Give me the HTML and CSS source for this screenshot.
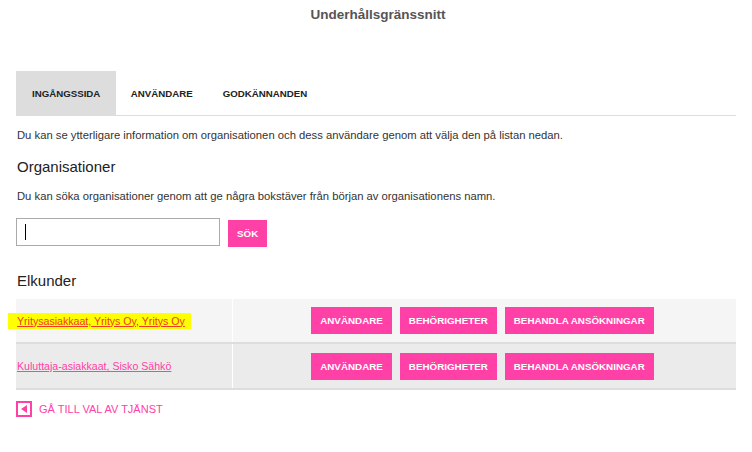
FILE: index.html
```html
<!DOCTYPE html>
<html lang="sv">
<head>
<meta charset="utf-8">
<title>Underhållsgränssnitt</title>
<link rel="stylesheet" href="styles.css">
</head>
<body>
<div class="page">
  <h1 class="title">Underhållsgränssnitt</h1>
  <nav class="tabs">
    <a class="tab active">INGÅNGSSIDA</a>
    <a class="tab">ANVÄNDARE</a>
    <a class="tab">GODKÄNNANDEN</a>
  </nav>
  <p class="text intro">Du kan se ytterligare information om organisationen och dess användare genom att välja den på listan nedan.</p>
  <h2 class="heading">Organisationer</h2>
  <p class="text">Du kan söka organisationer genom att ge några bokstäver från början av organisationens namn.</p>
  <div class="search">
    <div class="input"><span class="caret"></span></div>
    <button class="btn">SÖK</button>
  </div>
  <h2 class="heading elk">Elkunder</h2>
  <div class="table">
    <div class="row r1">
      <div class="cell name"><a class="link hl">Yritysasiakkaat, Yritys Oy, Yritys Oy </a></div>
      <div class="cell actions">
        <button class="btn">ANVÄNDARE</button>
        <button class="btn">BEHÖRIGHETER</button>
        <button class="btn">BEHANDLA ANSÖKNINGAR</button>
      </div>
    </div>
    <div class="row r2">
      <div class="cell name"><a class="link">Kuluttaja-asiakkaat, Sisko Sähkö </a></div>
      <div class="cell actions">
        <button class="btn">ANVÄNDARE</button>
        <button class="btn">BEHÖRIGHETER</button>
        <button class="btn">BEHANDLA ANSÖKNINGAR</button>
      </div>
    </div>
  </div>
  <a class="back">
    <span class="back-icon"><svg width="6" height="8" viewBox="0 0 6 8"><polygon points="6,0 6,8 0,4" fill="#ff40a6"/></svg></span>
    <span>GÅ TILL VAL AV TJÄNST</span>
  </a>
</div>
</body>
</html>
```
FILE: styles.css
```css
* { box-sizing: border-box; }
html, body { margin: 0; padding: 0; background: #fff; }
body { font-family: "Liberation Sans", Arial, sans-serif; color: #333; }
.page { padding: 0 16px; }
.title {
  margin: 0;
  padding-top: 7px;
  height: 71px;
  text-align: center;
  font-size: 13.5px;
  font-weight: bold;
  color: #555;
  padding-left: 4px;
}
.tabs {
  display: flex;
  height: 45px;
  border-bottom: 1px solid #ddd;
}
.tab {
  display: flex;
  align-items: center;
  padding: 0 15px;
  font-size: 9.7px;
  font-weight: bold;
  color: #222;
}
.tab.active { background: #ddd; padding: 0 15.5px 0 16px; }
.text { margin: 0; font-size: 11.25px; color: #333; padding-left: 1px; }
.intro { margin-top: 13px; }
.heading {
  margin: 0;
  font-size: 15px;
  font-weight: normal;
  color: #222;
  padding-left: 1px;
}
.intro + .heading { margin-top: 17px; }
.heading + .text { margin-top: 15px; }
.search { display: flex; align-items: flex-start; gap: 8px; margin-top: 16px; }
.input {
  width: 204px;
  height: 28px;
  border: 1px solid #aaa;
  display: flex;
  align-items: center;
  padding-left: 8px;
}
.caret { width: 1px; height: 16px; background: #000; }
.btn {
  border: 0;
  margin: 0;
  background: #ff40a6;
  color: #fff;
  font-family: "Liberation Sans", Arial, sans-serif;
  font-size: 9.8px;
  font-weight: bold;
  height: 27px;
  padding: 0 9px;
}
.search .btn { margin-top: 2px; padding: 0 9px; }
.heading.elk { margin-top: 25px; }
.table { margin-top: 10px; }
.row { display: flex; border-bottom: 2px solid #ddd; }
.r1 { background: #f5f5f5; height: 45px; }
.r2 { background: #ebebeb; height: 46px; }
.cell { display: flex; align-items: center; }
.name { width: 216px; padding-left: 1px; }
.actions {
  flex: 1;
  justify-content: center;
  gap: 8px;
  border-left: 1px solid #fff;
  padding-right: 4px;
}
.link {
  font-size: 10.6px;
  color: #ff40a6;
  text-decoration: underline;
}
.link.hl {
  color: #f03a22;
  background: #ffff00;
  padding: 2px 6px 2px 9px;
  margin-left: -9px;
}
.back {
  display: flex;
  align-items: center;
  gap: 7px;
  margin-top: 11px;
  font-size: 11px;
  color: #ff40a6;
}
.back-icon {
  width: 16px;
  height: 16px;
  border: 2px solid #ff40a6;
  display: flex;
  align-items: center;
  justify-content: center;
}
```
